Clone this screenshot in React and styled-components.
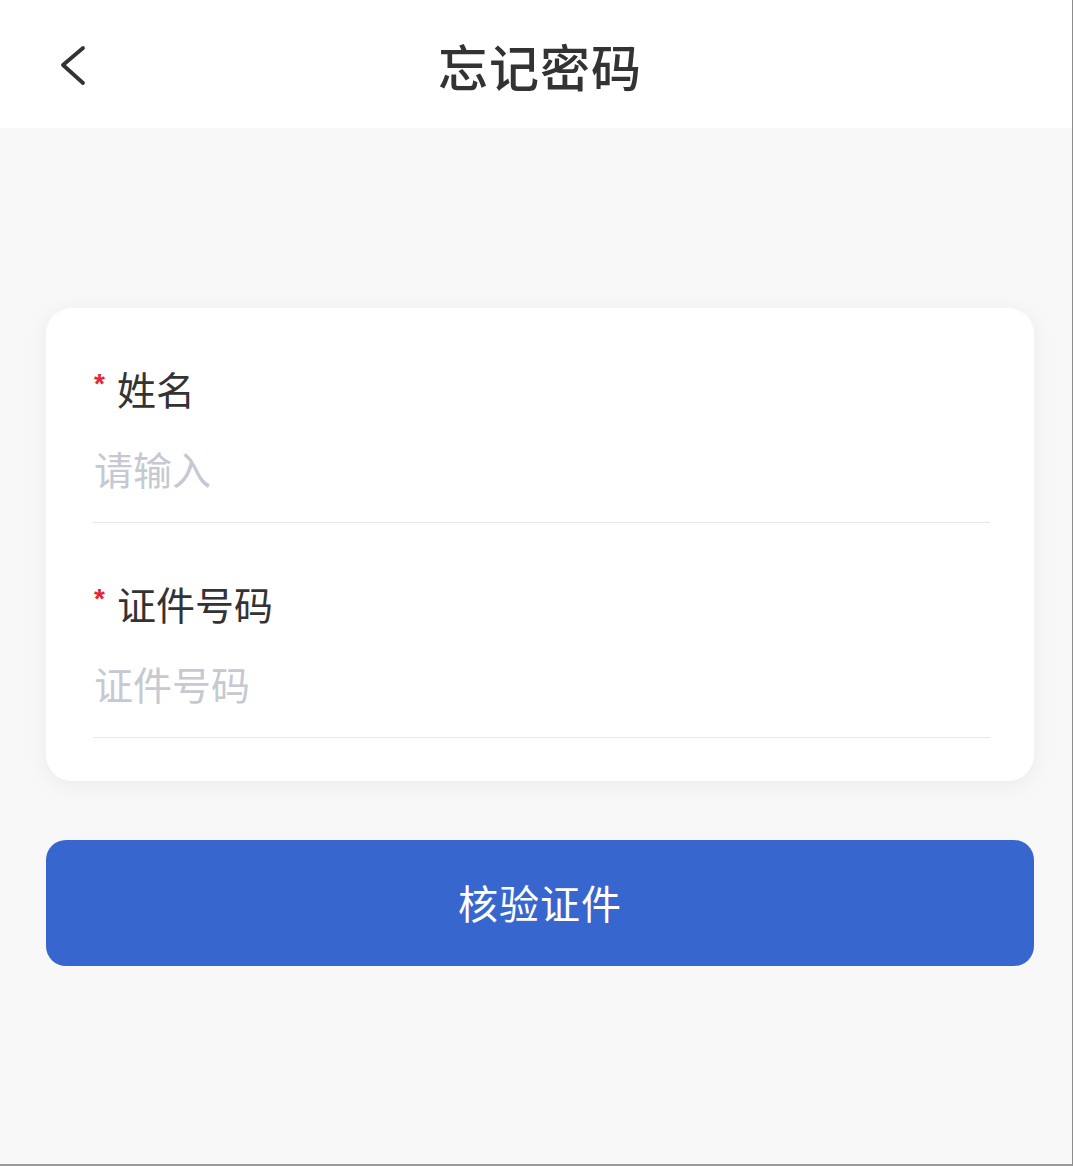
import React from "react";
import styled, { createGlobalStyle } from "styled-components";

const Global = createGlobalStyle`
  html, body { margin: 0; padding: 0; background: #f8f8f8; }
  body { font-family: "Noto Sans CJK SC", "Noto Sans", sans-serif; }
  * { box-sizing: border-box; }
`;

const Screen = styled.div`
  width: 1073px;
  min-height: 1166px;
  background: #f8f8f8;
  border-right: 1px solid #8c8c8c;
  border-bottom: 2px solid #9a9a9a;
  display: flex;
  flex-direction: column;
`;

const Header = styled.header`
  height: 128px;
  background: #ffffff;
  display: grid;
  grid-template-columns: 136px 1fr 128px;
  align-items: center;
`;

const BackButton = styled.button`
  border: none;
  background: transparent;
  padding: 0;
  margin-left: 52px;
  margin-top: 4px;
  width: 44px;
  height: 50px;
  display: flex;
  align-items: center;
  justify-content: center;
  color: #333;
  cursor: pointer;
`;

const Title = styled.h1`
  margin: 0;
  text-align: center;
  font-size: 50px;
  font-weight: 500;
  color: #333333;
  letter-spacing: 1px;
  line-height: 1;
  padding-top: 2px;
`;

const Body = styled.main`
  padding: 180px 38px 0 46px;
  display: flex;
  flex-direction: column;
`;

const Card = styled.section`
  background: #ffffff;
  border-radius: 26px;
  box-shadow: 0 4px 22px rgba(0, 0, 0, 0.06);
  padding: 0 44px 43px 47px;
`;

const Field = styled.div`
  padding: 52px 0 24px;
  border-bottom: 1px solid #e9e9ec;
  display: flex;
  flex-direction: column;
  gap: 22px;
`;

const Label = styled.label`
  position: relative;
  display: flex;
  align-items: center;
  height: 56px;
  padding-left: 24px;
  font-size: 39px;
  color: #333333;
  line-height: 56px;
`;

const Required = styled.span`
  position: absolute;
  left: 1px;
  top: 10px;
  font-family: "Liberation Sans", "DejaVu Sans", sans-serif;
  font-size: 28px;
  font-weight: 700;
  color: #e22633;
  line-height: 1;
`;

const Input = styled.input`
  height: 60px;
  border: none;
  outline: none;
  background: transparent;
  padding: 0 0 0 1px;
  font-family: inherit;
  font-size: 39px;
  color: #333;
  &::placeholder {
    color: #c6c9d1;
  }
`;

const SubmitButton = styled.button`
  margin-top: 59px;
  height: 126px;
  border: none;
  border-radius: 20px;
  background: #3866cf;
  color: #ffffff;
  font-family: inherit;
  font-size: 40px;
  font-weight: 400;
  letter-spacing: 1px;
  padding-bottom: 3px;
  cursor: pointer;
`;

function ChevronLeft() {
  return (
    <svg width="30" height="42" viewBox="0 0 30 42" fill="none">
      <path
        d="M24 3 L4 20 L24 38"
        stroke="#333"
        strokeWidth="3.8"
        strokeLinecap="round"
        strokeLinejoin="round"
      />
    </svg>
  );
}

const fields = [
  { id: "name", label: "姓名", placeholder: "请输入" },
  { id: "idno", label: "证件号码", placeholder: "证件号码" },
];

export default function App() {
  return (
    <>
      <Global />
      <Screen>
        <Header>
          <BackButton aria-label="返回">
            <ChevronLeft />
          </BackButton>
          <Title>忘记密码</Title>
          <span />
        </Header>
        <Body>
          <Card>
            {fields.map((f) => (
              <Field key={f.id}>
                <Label htmlFor={f.id}>
                  <Required>*</Required>
                  {f.label}
                </Label>
                <Input id={f.id} placeholder={f.placeholder} />
              </Field>
            ))}
          </Card>
          <SubmitButton>核验证件</SubmitButton>
        </Body>
      </Screen>
    </>
  );
}
